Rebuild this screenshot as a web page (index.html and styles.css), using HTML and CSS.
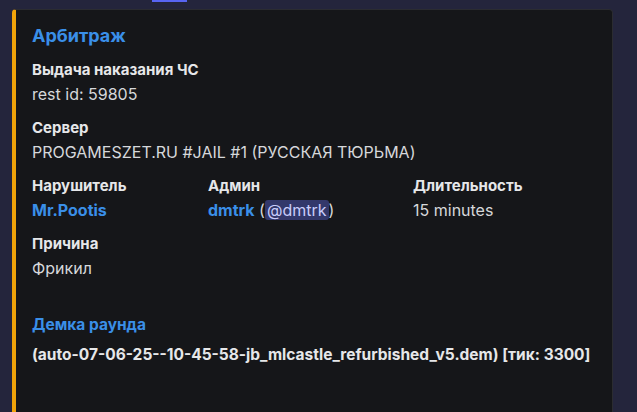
FILE: index.html
```html
<!DOCTYPE html>
<html lang="ru">
<head>
	<meta charset="UTF-8">
	<title>embed</title>
<link rel="stylesheet" href="styles.css">
</head>
<body>
<div class="topbar"><span class="tab"></span></div>
<div class="embed">
	<div class="title">Арбитраж</div>
	<div class="fields">
		<div class="field full">
			<div class="name">Выдача наказания ЧС</div>
			<div class="value">rest id: 59805</div>
		</div>
		<div class="field full">
			<div class="name">Сервер</div>
			<div class="value">PROGAMESZET.RU #JAIL #1 (РУССКАЯ ТЮРЬМА)</div>
		</div>
		<div class="field">
			<div class="name">Нарушитель</div>
			<div class="value"><a class="link">Mr.Pootis</a></div>
		</div>
		<div class="field">
			<div class="name">Админ</div>
			<div class="value"><a class="link">dmtrk</a> (<span class="mention">@dmtrk</span>)</div>
		</div>
		<div class="field">
			<div class="name">Длительность</div>
			<div class="value">15 minutes</div>
		</div>
		<div class="field full">
			<div class="name">Причина</div>
			<div class="value">Фрикил</div>
		</div>
	</div>
	<div class="demo">
		<div class="demo-title">Демка раунда</div>
		<div class="demo-file">(auto-07-06-25--10-45-58-jb_mlcastle_refurbished_v5.dem) [тик: 3300]</div>
	</div>
</div>
</body>
</html>
```
FILE: styles.css
```css
*{margin:0;padding:0;box-sizing:border-box;}
html,body{height:100%;}
body{background:#24253c;font-family:Inter,"Noto Sans",sans-serif;color:#dbdee1;overflow:hidden;}
.topbar{height:9px;padding-left:152px;}
.tab{display:block;width:35px;height:2px;background:#5865f2;}
.embed{margin-left:12px;width:601px;height:420px;background:#151619;border:1px solid #2b2c31;border-left:4px solid #f0a30a;border-radius:4px;padding:14px 16px 0 16px;}
.title{font-size:18px;font-weight:700;color:#3a8fe8;line-height:24px;}
.fields{display:grid;grid-template-columns:176px 205px 1fr;row-gap:12px;margin-top:11px;}
.field.full{grid-column:1/-1;}
.name{font-size:15px;font-weight:700;line-height:22px;margin-bottom:2px;color:#e6e7e9;}
.value{font-size:16px;line-height:22px;color:#d6d8db;}
.link{color:#3a8fe8;font-weight:700;}
.mention{background:#33386b;color:#c9cdfb;border-radius:3px;padding:0 2px;}
.demo{margin-top:36px;}
.demo-title{font-size:15.5px;font-weight:700;color:#3a8fe8;line-height:20px;}
.demo-file{font-size:15.5px;font-weight:700;line-height:22px;margin-top:9px;color:#e6e7e9;}
```
